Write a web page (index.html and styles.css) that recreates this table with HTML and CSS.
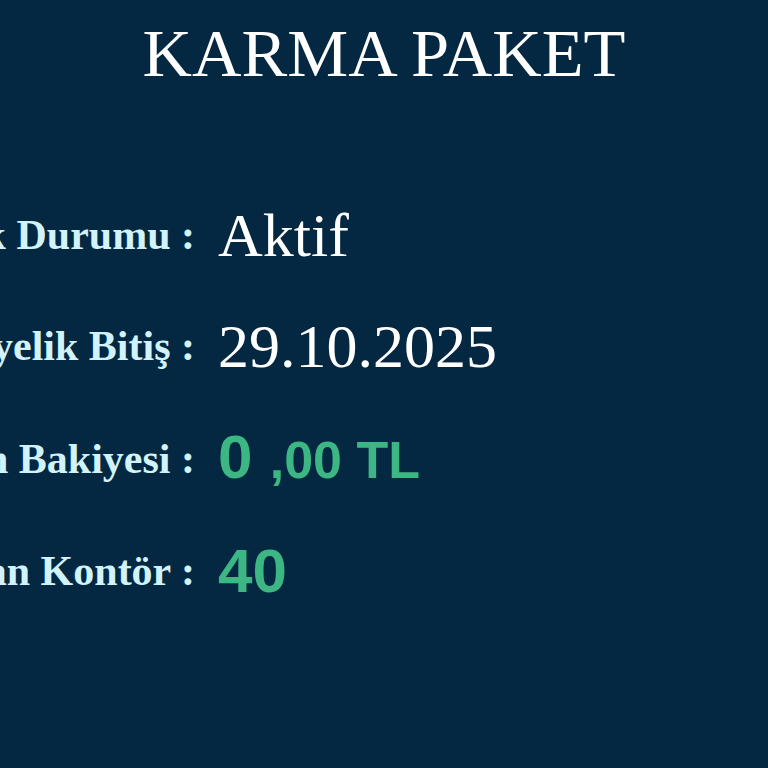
FILE: index.html
```html
<!DOCTYPE html>
<html lang="tr">
<head>
<meta charset="utf-8">
<title>Karma Paket</title>
<link rel="stylesheet" href="styles.css">
</head>
<body>
<main class="panel">
  <h1 class="title">KARMA PAKET</h1>
  <div class="info">
    <div class="label"><span>Üyelik Durumu :</span></div>
    <div class="value">Aktif</div>

    <div class="label"><span>Üyelik Bitiş :</span></div>
    <div class="value">29.10.2025</div>

    <div class="label"><span>Cüzdan Bakiyesi :</span></div>
    <div class="value green"><span class="big">0</span> <span class="small">,00 TL</span></div>

    <div class="label"><span>Kalan Kontör :</span></div>
    <div class="value green"><span class="big">40</span></div>
  </div>
</main>
</body>
</html>
```

FILE: styles.css
```css
html, body {
  margin: 0;
  padding: 0;
  width: 768px;
  height: 768px;
  overflow: hidden;
  background: #042842;
}

.panel {
  padding-top: 14px;
  font-family: "Liberation Serif", "Times New Roman", serif;
}

.title {
  margin: 0 0 107px 0;
  text-align: center;
  font-weight: normal;
  font-size: 68.5px;
  line-height: normal;
  color: #ffffff;
}

.info {
  display: grid;
  grid-template-columns: 195px auto;
  column-gap: 23px;
  row-gap: 41px;
  align-items: center;
}

.label {
  display: flex;
  justify-content: flex-end;
  white-space: nowrap;
  font-weight: bold;
  font-size: 42px;
  color: #d2f3fa;
}

.value {
  font-size: 62px;
  line-height: 70px;
  color: #ffffff;
  white-space: nowrap;
}

.green {
  font-family: "Liberation Sans", Arial, sans-serif;
  font-weight: bold;
  color: #3cb784;
}

.big {
  font-size: 62px;
}

.small {
  font-size: 52px;
}
```
